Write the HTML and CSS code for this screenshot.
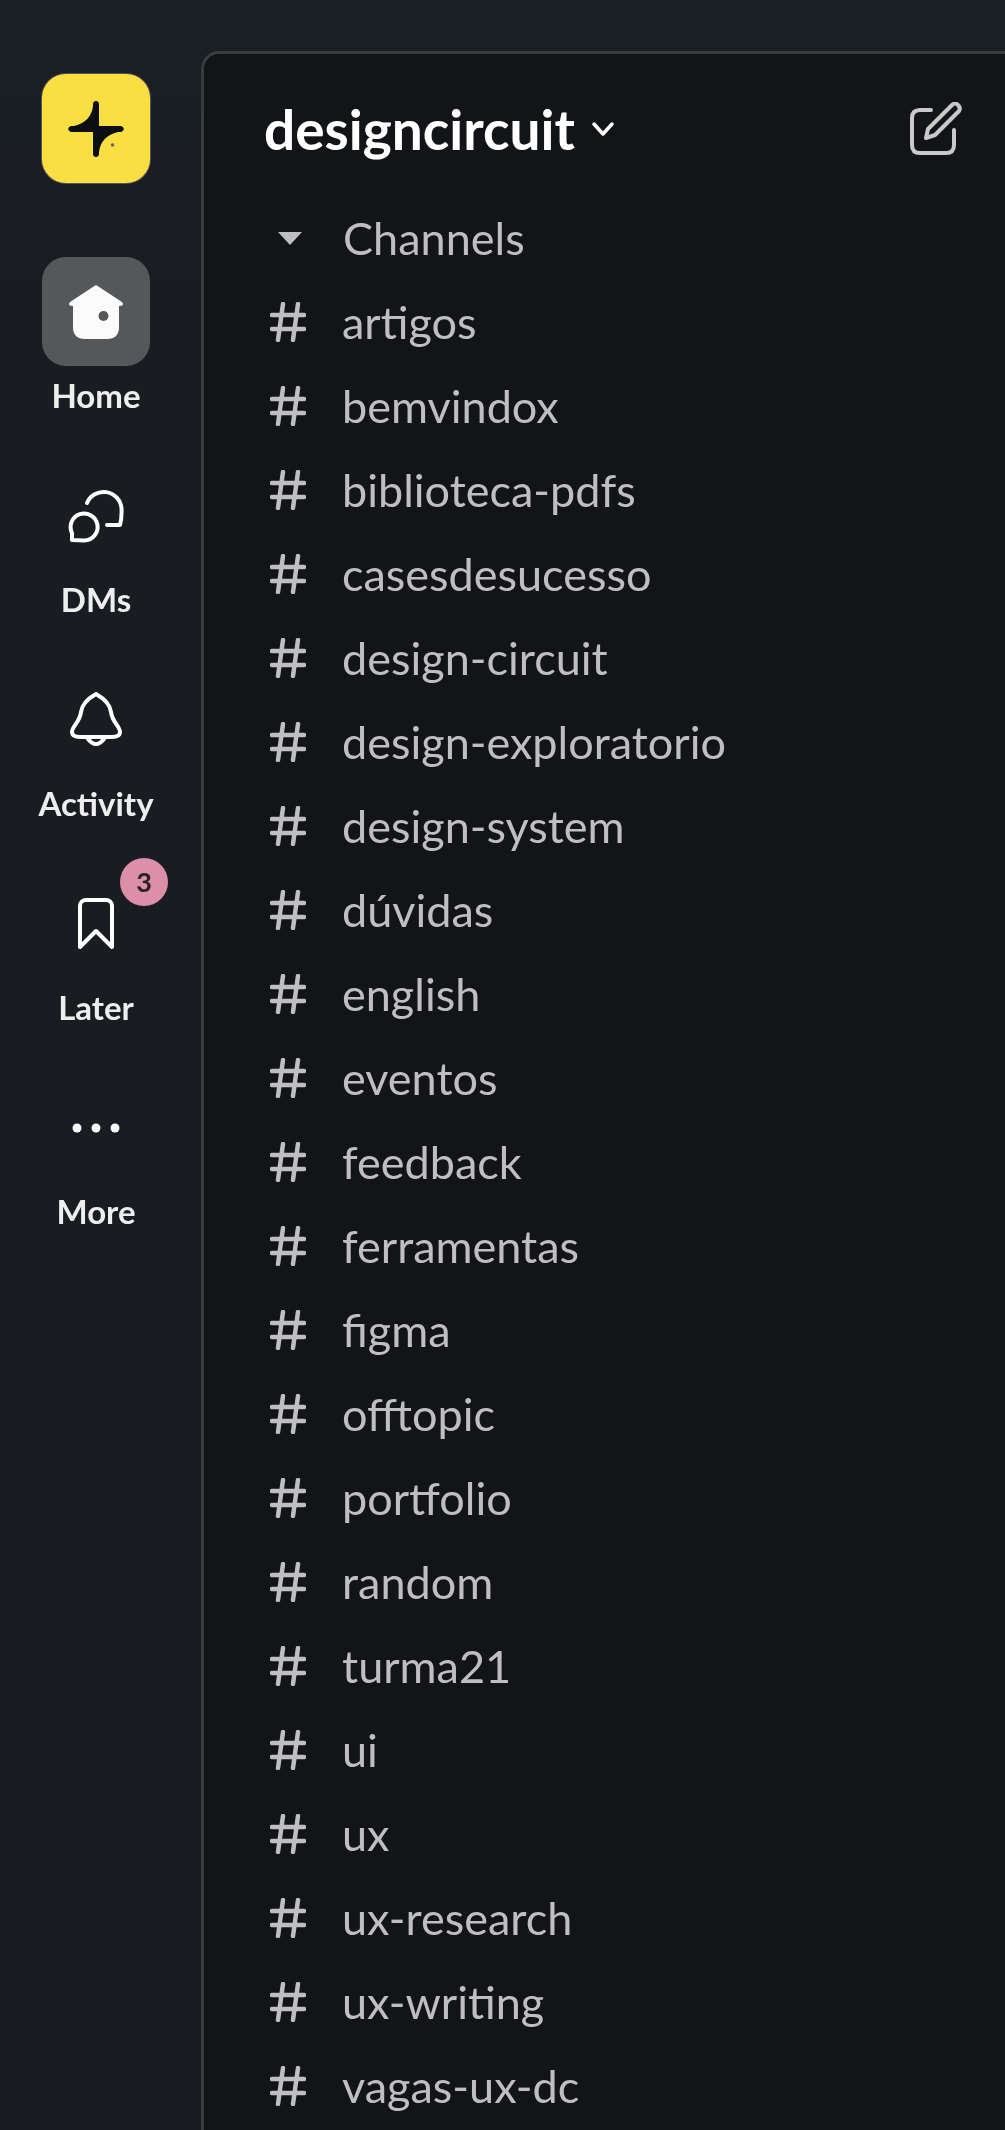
FILE: index.html
```html
<!DOCTYPE html>
<html lang="en">
<head>
    <meta charset="UTF-8">
    <meta name="viewport" content="width=device-width, initial-scale=1.0">
    <title>designcircuit</title>
    <link rel="stylesheet" href="styles.css">
</head>
<body>
    <svg class="defs" width="0" height="0">
        <symbol id="hash" viewBox="0 0 36 40">
            <path d="M13 2 8 38M28 2 23 38M2 13H34M2 27H34" fill="none" stroke="currentColor" stroke-width="4.500" stroke-linecap="round"/>
        </symbol>
    </svg>

    <nav class="rail">
        <div class="logo">
            <svg width="108" height="109" viewBox="42 74 108 109">
                <path d="M93 104C93 100 99 100 99 104V126H120C125 126 125 132 120 132H99V154C99 158 93 158 93 154V132H72C67 132 67 126 72 126H93Z" fill="#0d0e12"/>
                <path d="M93 106Q91 122 74 126H93ZM99 152Q101 136 118 132H99Z" fill="#0d0e12"/>
                <circle cx="112.500" cy="145" r="1.800" fill="#6b6a5c"/>
            </svg>
        </div>

        <a class="nav-item">
            <span class="nav-icon active">
                <svg width="108" height="109" viewBox="42 257 108 109">
                    <path d="M96 285 122 302Q125 306 119 306V327Q119 339 107 339H85Q73 339 73 327V306Q67 306 70 302Z" fill="#fbfbfb"/>
                    <circle cx="103.500" cy="316" r="5" fill="#565759"/>
                </svg>
            </span>
            <span class="nav-label">Home</span>
        </a>
        <a class="nav-item">
            <span class="nav-icon">
                <svg width="108" height="109" viewBox="42 461 108 109" fill="none" stroke="#fff" stroke-width="4" stroke-linejoin="round" stroke-linecap="round">
                    <path d="M87 503A18 18 0 0 1 121.500 508Q122 518 120 525H107"/>
                    <path d="M84.500 540.500A13.500 13.500 0 1 0 72 533L72 540Z"/>
                </svg>
            </span>
            <span class="nav-label">DMs</span>
        </a>
        <a class="nav-item">
            <span class="nav-icon">
                <svg width="108" height="109" viewBox="42 665 108 109" fill="none" stroke="#fff" stroke-width="4" stroke-linejoin="round" stroke-linecap="round">
                    <path d="M96 694C89 698 82 703 81 712C80 722 72 726 72 732C72 736 76 737 80 737H112C116 737 120 736 120 732C120 726 112 722 111 712C110 703 103 698 96 694Z"/>
                    <path d="M88 739Q96 749 104 739"/>
                </svg>
            </span>
            <span class="nav-label">Activity</span>
        </a>
        <a class="nav-item">
            <span class="nav-icon">
                <svg width="108" height="109" viewBox="42 869 108 109" fill="none" stroke="#fff" stroke-width="4" stroke-linejoin="round" stroke-linecap="round">
                    <path d="M80 947V906A6 6 0 0 1 86 900H106A6 6 0 0 1 112 906V947L96 931Z"/>
                </svg>
            </span>
            <span class="badge">3</span>
            <span class="nav-label">Later</span>
        </a>
        <a class="nav-item">
            <span class="nav-icon">
                <svg width="108" height="109" viewBox="42 1073 108 109" fill="#fff">
                    <circle cx="77" cy="1128" r="4.500"/>
                    <circle cx="96" cy="1128" r="4.500"/>
                    <circle cx="115" cy="1128" r="4.500"/>
                </svg>
            </span>
            <span class="nav-label">More</span>
        </a>
    </nav>

    <main class="panel">
        <header class="panel-head">
            <h1 class="workspace">designcircuit</h1>
            <svg class="chevron" width="24" height="18" viewBox="0 0 24 18" fill="none" stroke="#fff" stroke-width="3.500" stroke-linecap="round" stroke-linejoin="round">
                <path d="M3 4 12 14 21 4"/>
            </svg>
            <svg class="compose" width="54" height="54" viewBox="0 0 54 54" fill="none" stroke="#c9c9ca" stroke-width="4" stroke-linecap="round" stroke-linejoin="round">
                <path d="M22 8H11Q3 8 3 16V43Q3 51 11 51H37Q45 51 45 43V28"/>
                <path d="M17 36 19 27 43 3Q46 0 49 3 52 6 50 9L26 33Z"/>
            </svg>
        </header>

        <div class="section-head">
            <span class="caret"></span>
            <span class="section-name">Channels</span>
        </div>
        <ul class="channels">
            <li><svg class="hash"><use href="#hash"/></svg>artigos</li>
            <li><svg class="hash"><use href="#hash"/></svg>bemvindox</li>
            <li><svg class="hash"><use href="#hash"/></svg>biblioteca-pdfs</li>
            <li><svg class="hash"><use href="#hash"/></svg>casesdesucesso</li>
            <li><svg class="hash"><use href="#hash"/></svg>design-circuit</li>
            <li><svg class="hash"><use href="#hash"/></svg>design-exploratorio</li>
            <li><svg class="hash"><use href="#hash"/></svg>design-system</li>
            <li><svg class="hash"><use href="#hash"/></svg>dúvidas</li>
            <li><svg class="hash"><use href="#hash"/></svg>english</li>
            <li><svg class="hash"><use href="#hash"/></svg>eventos</li>
            <li><svg class="hash"><use href="#hash"/></svg>feedback</li>
            <li><svg class="hash"><use href="#hash"/></svg>ferramentas</li>
            <li><svg class="hash"><use href="#hash"/></svg>figma</li>
            <li><svg class="hash"><use href="#hash"/></svg>offtopic</li>
            <li><svg class="hash"><use href="#hash"/></svg>portfolio</li>
            <li><svg class="hash"><use href="#hash"/></svg>random</li>
            <li><svg class="hash"><use href="#hash"/></svg>turma21</li>
            <li><svg class="hash"><use href="#hash"/></svg>ui</li>
            <li><svg class="hash"><use href="#hash"/></svg>ux</li>
            <li><svg class="hash"><use href="#hash"/></svg>ux-research</li>
            <li><svg class="hash"><use href="#hash"/></svg>ux-writing</li>
            <li><svg class="hash"><use href="#hash"/></svg>vagas-ux-dc</li>
        </ul>
    </main>
</body>
</html>
```

FILE: styles.css
```css
html, body {
    height: 100%;
}
body {
    margin: 0;
    display: flex;
    overflow: hidden;
    background: linear-gradient(#1a2024, #191c20 300px);
    font-family: Lato, sans-serif;
    color: #fff;
}
.defs {
    position: absolute;
}
.rail {
    flex: 0 0 201px;
    display: flex;
    flex-direction: column;
    align-items: center;
    padding: 74px 9px 0 0;
    box-sizing: border-box;
    filter: blur(0.6px);
}
.logo {
    width: 108px;
    height: 109px;
    margin-bottom: 74px;
    background-color: #fbdf42;
    border-radius: 24px;
    box-shadow: 0 0 0 1px #55565a;
}
.logo svg, .nav-icon svg {
    display: block;
}
.nav-item {
    position: relative;
    height: 204px;
    display: flex;
    flex-direction: column;
    align-items: center;
}
.nav-icon {
    width: 108px;
    height: 109px;
    border-radius: 24px;
}
.nav-icon.active {
    background-color: #565759;
}
.nav-label {
    margin-top: 9px;
    font-size: 33px;
    line-height: 40px;
    font-weight: 700;
    color: #eeeeee;
}
.badge {
    position: absolute;
    top: -11px;
    left: 78px;
    width: 48px;
    height: 48px;
    border-radius: 50%;
    background-color: #dc8fa8;
    color: #2a2228;
    font-size: 27px;
    font-weight: 700;
    line-height: 48px;
    text-align: center;
}
.panel {
    flex: 1;
    margin-top: 51px;
    padding-left: 60px;
    background-color: #131417;
    border-top: 3px solid #3a3b3e;
    border-left: 3px solid #3a3b3e;
    border-top-left-radius: 18px;
    filter: blur(0.6px);
}
.panel-head {
    display: flex;
    align-items: center;
    height: 86px;
    margin-top: 32px;
}
.workspace {
    margin: 0;
    font-size: 55px;
    font-weight: 700;
    line-height: 86px;
}
.chevron {
    margin: 0 0 0 16px;
}
.compose {
    margin: 0 42px 0 auto;
}
.section-head, .channels li {
    display: flex;
    align-items: center;
    height: 84px;
    font-size: 45px;
    color: #bfbfc1;
}
.section-head {
    margin-top: 24px;
}
.caret {
    width: 0;
    height: 0;
    margin: 0 41px 0 14px;
    border-left: 12px solid transparent;
    border-right: 12px solid transparent;
    border-top: 13px solid #bfbfc1;
}
.channels {
    margin: 0;
    padding: 0;
    list-style: none;
}
.hash {
    flex: none;
    width: 36px;
    height: 40px;
    margin: 0 36px 0 6px;
}
```
